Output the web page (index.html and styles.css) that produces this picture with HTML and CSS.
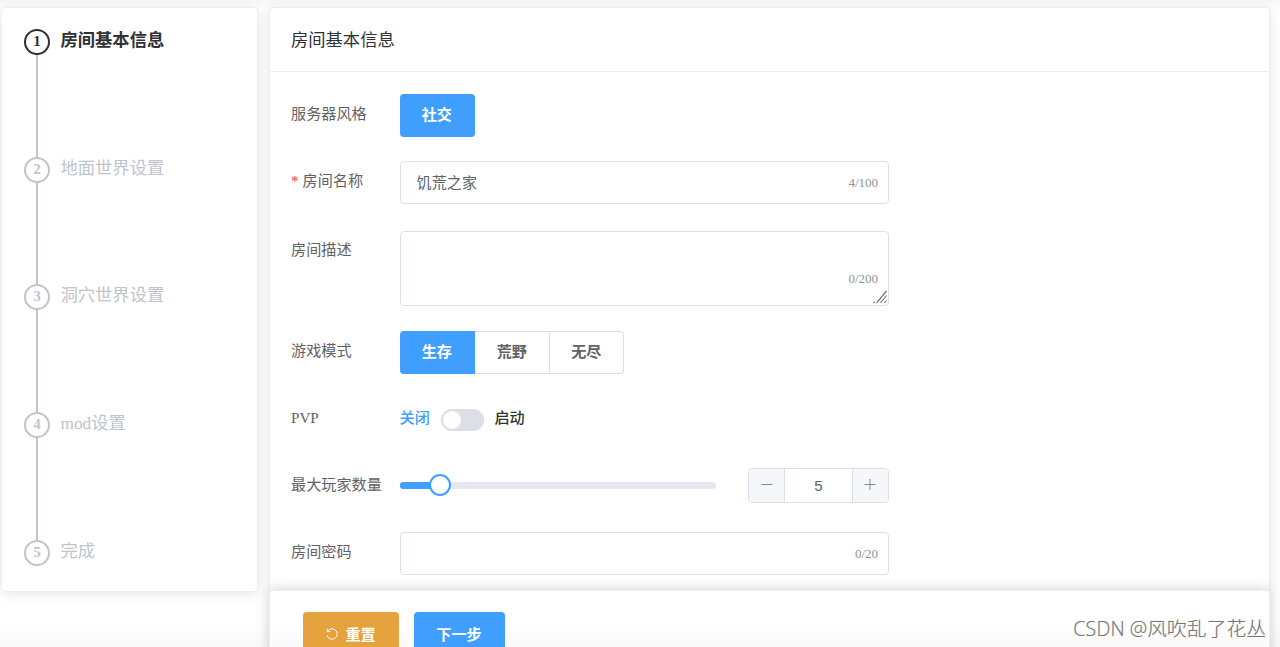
FILE: index.html
```html
<!DOCTYPE html>
<html lang="zh-CN">
<head>
    <meta charset="UTF-8">
    <meta name="viewport" content="width=device-width, initial-scale=1.0">
    <title>房间基本信息</title>
    <link rel="stylesheet" href="styles.css">
</head>
<body>
    <div class="layout">
        <div class="card steps">
            <div class="step active">
                <div class="step-head"><div class="step-icon"><span>1</span></div></div>
                <div class="step-title">房间基本信息</div>
            </div>
            <div class="step">
                <div class="step-head"><div class="step-icon"><span>2</span></div></div>
                <div class="step-title">地面世界设置</div>
            </div>
            <div class="step">
                <div class="step-head"><div class="step-icon"><span>3</span></div></div>
                <div class="step-title">洞穴世界设置</div>
            </div>
            <div class="step">
                <div class="step-head"><div class="step-icon"><span>4</span></div></div>
                <div class="step-title">mod设置</div>
            </div>
            <div class="step">
                <div class="step-head"><div class="step-icon"><span>5</span></div></div>
                <div class="step-title">完成</div>
            </div>
        </div>

        <div class="main">
            <div class="card panel">
                <div class="panel-header">房间基本信息</div>
                <form class="form">
                    <div class="form-item">
                        <label>服务器风格</label>
                        <div class="radio-group">
                            <button type="button" class="radio checked">社交</button>
                        </div>
                    </div>
                    <div class="form-item">
                        <label class="required">房间名称</label>
                        <div class="input">
                            <input type="text" value="饥荒之家">
                            <span class="count">4/100</span>
                        </div>
                    </div>
                    <div class="form-item form-item-textarea">
                        <label>房间描述</label>
                        <div class="input textarea">
                            <textarea></textarea>
                            <span class="count">0/200</span>
                            <svg class="resizer" width="15" height="15" viewBox="0 0 15 15">
                                <path d="M0.5 13l1.5-1M3.5 13L13.5 1M7.5 13L13.5 5.5M11.5 13l2-2.5"/>
                            </svg>
                        </div>
                    </div>
                    <div class="form-item">
                        <label>游戏模式</label>
                        <div class="radio-group">
                            <button type="button" class="radio checked">生存</button>
                            <button type="button" class="radio">荒野</button>
                            <button type="button" class="radio">无尽</button>
                        </div>
                    </div>
                    <div class="form-item">
                        <label>PVP</label>
                        <div class="switch">
                            <span class="switch-label on">关闭</span>
                            <span class="switch-core"></span>
                            <span class="switch-label">启动</span>
                        </div>
                    </div>
                    <div class="form-item">
                        <label>最大玩家数量</label>
                        <div class="slider">
                            <div class="slider-track">
                                <div class="slider-bar" style="width: 12.9%"></div>
                                <div class="slider-button" style="left: 12.9%"></div>
                            </div>
                            <div class="number">
                                <button type="button">
                                    <svg width="12" height="12" viewBox="0 0 12 12"><path d="M0.5 5.5h11"/></svg>
                                </button>
                                <input type="text" value="5">
                                <button type="button">
                                    <svg width="12" height="12" viewBox="0 0 12 12"><path d="M0.5 5.5h11M6 0v11"/></svg>
                                </button>
                            </div>
                        </div>
                    </div>
                    <div class="form-item">
                        <label>房间密码</label>
                        <div class="input">
                            <input type="text">
                            <span class="count">0/20</span>
                        </div>
                    </div>
                </form>
            </div>
            <div class="card footer">
                <button type="button" class="btn btn-warning">
                    <svg width="14" height="14" viewBox="0 0 14 14"><path d="M2.6 4.3A5.2 5.2 0 1 1 2 8.4M2.2 1.6v3h3"/></svg>
                    <span>重置</span>
                </button>
                <button type="button" class="btn btn-primary">下一步</button>
            </div>
        </div>
    </div>
    <div class="watermark">CSDN @风吹乱了花丛</div>
</body>
</html>
```
FILE: styles.css
```css
* {
    box-sizing: border-box;
}
body {
    margin: 0;
    height: 647px;
    overflow: hidden;
    font-family: "Liberation Serif", "Noto Sans CJK SC", serif;
    font-size: 15.15px;
    color: #303133;
    background: linear-gradient(#f7f7f7, #fff 9px, #fff 620px, #fafafa);
}
button, input, textarea {
    font-family: "Liberation Sans", "Noto Sans CJK SC", sans-serif;
    font-size: 15.1px;
    margin: 0;
}
.layout {
    display: flex;
    align-items: flex-start;
    gap: 11px;
    padding: 7px 10px 0 1px;
}
.card {
    background: #fff;
    border: 1px solid #ebeef5;
    border-radius: 4px;
    box-shadow: 0 2px 13px rgba(0, 0, 0, 0.1);
}

/* steps */
.steps {
    width: 257px;
    height: 585px;
    padding: 21px 22px 0;
}
.step {
    display: flex;
    height: 127.7px;
    color: #c0c4cc;
}
.step-head {
    display: flex;
    flex-direction: column;
    align-items: center;
    width: 26px;
    margin-right: 10.5px;
}
.step-head::after {
    content: "";
    flex: 1;
    width: 2px;
    background: #c0c4cc;
}
.step:last-child .step-head::after {
    display: none;
}
.step-icon {
    display: flex;
    align-items: center;
    justify-content: center;
    width: 26px;
    height: 26px;
    border: 2px solid;
    border-radius: 50%;
    font-size: 15px;
    font-weight: bold;
    line-height: 20px;
    padding-bottom: 2px;
}
.step-title {
    font-size: 17.3px;
    line-height: 24.6px;
}
.step.active {
    color: #303133;
}
.step.active .step-title {
    font-weight: bold;
}

/* main panel */
.main {
    flex: 1;
}
.panel {
    height: 583px;
    border-bottom: none;
    border-radius: 4px 4px 0 0;
}
.panel-header {
    height: 64px;
    padding: 0 21px;
    border-bottom: 1px solid #ebeef5;
    font-size: 17.3px;
    line-height: 65px;
}
.form {
    padding: 22px 21px 0;
}
.form-item {
    display: flex;
    align-items: center;
    height: 43px;
    margin-bottom: 24.2px;
}
.form-item label {
    width: 108.6px;
    color: #606266;
    line-height: 40px;
    padding-bottom: 3px;
}
.required::before {
    content: "*";
    color: #f56c6c;
    margin-right: 4px;
    font-weight: bold;
}
.form-item-textarea {
    height: 78px;
    align-items: flex-start;
}
.form-item-textarea label {
    padding-top: 2px;
}
.radio-group {
    display: flex;
}
.radio {
    height: 43px;
    width: 74.5px;
    padding: 0 0 5px;
    border: 1px solid #dcdfe6;
    border-left: none;
    background: #fff;
    color: #606266;
    font-weight: bold;
}
.radio:first-child {
    width: 75.5px;
    border-radius: 4px 0 0 4px;
}
.radio:last-child {
    border-radius: 0 4px 4px 0;
}
.radio:only-child {
    border-radius: 4px;
}
.radio.checked {
    background: #409eff;
    border-color: #409eff;
    color: #fff;
}
.input {
    position: relative;
    width: 489px;
    height: 43px;
}
.input input, .input textarea {
    display: block;
    width: 100%;
    height: 100%;
    padding: 0 16px 3px;
    border: 1px solid #dcdfe6;
    border-radius: 4px;
    background: #fff;
    color: #606266;
    outline: none;
    resize: none;
}
.textarea {
    height: 75px;
    margin-top: 2.5px;
}
.count {
    position: absolute;
    right: 10.5px;
    top: 11px;
    font-size: 13px;
    line-height: 21px;
    color: #909399;
}
.textarea .count {
    top: 37px;
}
.resizer {
    position: absolute;
    right: 1px;
    bottom: 1px;
    fill: none;
    stroke: #777;
    stroke-width: 1.2;
}
.switch {
    display: flex;
    align-items: center;
    padding-top: 1px;
}
.switch-label {
    line-height: 20px;
    padding-bottom: 4px;
    font-weight: 500;
}
.switch-label.on {
    color: #409eff;
}
.switch-core {
    width: 43px;
    height: 22px;
    margin: 0 10.5px 0 11px;
    padding: 2px;
    border-radius: 11px;
    background: #dcdfe6;
}
.switch-core::after {
    content: "";
    display: block;
    width: 18px;
    height: 18px;
    border-radius: 50%;
    background: #fff;
}
.slider {
    display: flex;
    align-items: center;
    justify-content: space-between;
    width: 489px;
    padding-bottom: 2px;
}
.slider-track {
    position: relative;
    width: 316.5px;
    height: 6.5px;
    border-radius: 3px;
    background: #e4e7ed;
}
.slider-bar {
    height: 100%;
    border-radius: 3px 0 0 3px;
    background: #409eff;
}
.slider-button {
    position: absolute;
    top: -8px;
    width: 22px;
    height: 22px;
    margin-left: -11.5px;
    border: 2px solid #409eff;
    border-radius: 50%;
    background: #fff;
}
.number {
    display: flex;
    width: 140.4px;
    height: 35px;
    border: 1px solid #dcdfe6;
    border-radius: 4px;
    overflow: hidden;
}
.number button {
    width: 35px;
    padding: 0;
    border: none;
    background: #f5f7fa;
}
.number svg {
    fill: none;
    stroke: #85878b;
}
.number input {
    flex: 1;
    min-width: 0;
    padding: 0;
    border: 1px solid #dcdfe6;
    border-width: 0 1px;
    color: #606266;
    text-align: center;
}

/* footer */
.footer {
    position: relative;
    display: flex;
    gap: 15px;
    height: 80px;
    padding: 21px 32.5px 0;
    background: linear-gradient(#fff 30px, #fafafa 57px);
    box-shadow: 0 0 13px rgba(0, 0, 0, 0.2);
}
.btn {
    display: flex;
    align-items: center;
    justify-content: center;
    height: 43px;
    padding: 0 0 2px;
    border: none;
    border-radius: 4px;
    color: #fff;
    font-weight: bold;
}
.btn-warning {
    width: 96px;
    gap: 6px;
    background: #e6a23c;
}
.btn-warning svg {
    margin-top: 2px;
    fill: none;
    stroke: #fff;
}
.btn-primary {
    width: 91px;
    background: #409eff;
}
.watermark {
    position: absolute;
    right: 14px;
    bottom: 5px;
    font-family: "Open Sans", "Noto Sans CJK SC", sans-serif;
    font-size: 19.8px;
    font-weight: 300;
    line-height: 26px;
    color: #777;
    text-shadow: 1px 1px 0 #fff, 0 0 1px #aaa;
}
```
